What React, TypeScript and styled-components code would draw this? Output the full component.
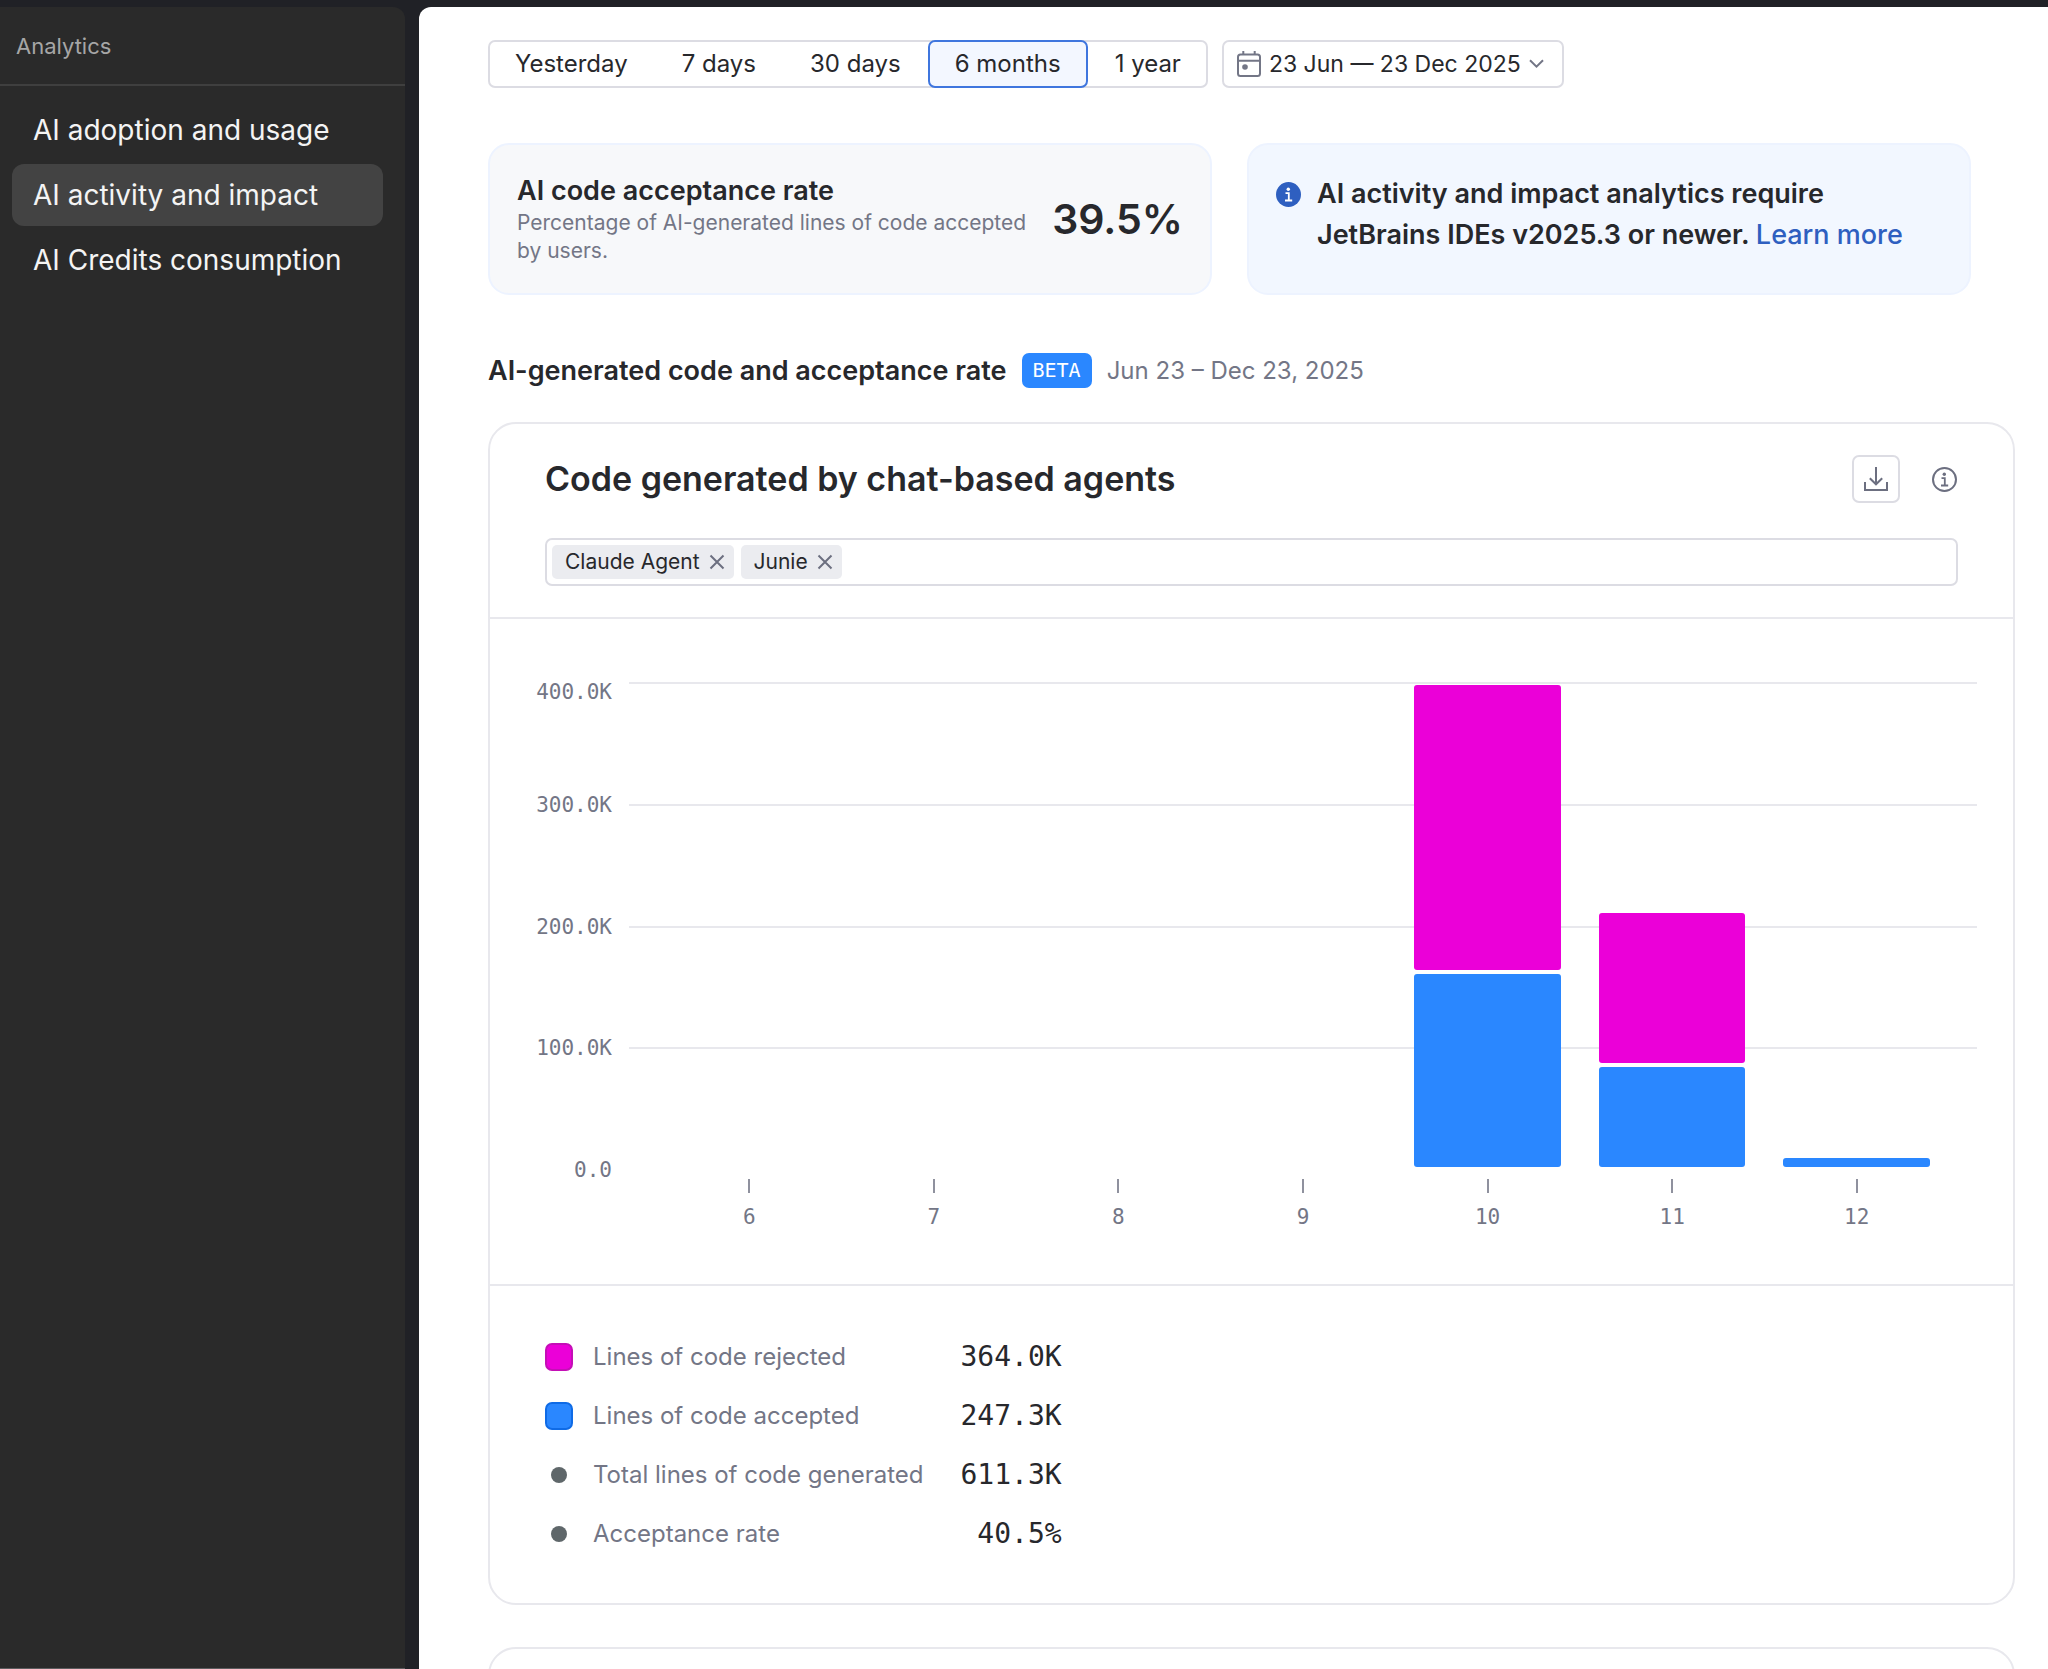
import React, { useState } from 'react';
import styled, { createGlobalStyle } from 'styled-components';

const sans = "Inter, 'Liberation Sans', sans-serif";
const mono = "'DejaVu Sans Mono', 'Liberation Mono', monospace";

const color = {
  frame: '#202126',
  sidebar: '#2a2a2a',
  ink: '#27282c',
  muted: '#737686',
  line: '#e8e8ed',
  control: '#dcdce3',
  accent: '#2e5fc0',
  blue: '#2a87ff',
  magenta: '#eb00d8',
};

const GlobalStyle = createGlobalStyle`
  *, *::before, *::after { box-sizing: border-box; }
  body {
    margin: 0;
    background: ${color.frame};
    color: ${color.ink};
    font-family: ${sans};
  }
  button, input { font: inherit; color: inherit; }
  h1, h2, p, ul, dl, dd { margin: 0; padding: 0; }
  ul { list-style: none; }
`;

const Shell = styled.div`
  display: grid;
  grid-template-columns: 405px minmax(0, 1fr);
  gap: 14px;
  height: 100vh;
  padding-top: 7px;
  overflow: hidden;
`;

/* Sidebar */

const Sidebar = styled.aside`
  border-bottom: 1px solid #5c5c5e;
  border-radius: 0 12px 0 0;
  background: ${color.sidebar};
`;

const SidebarTitle = styled.p`
  padding: 24px 16px 23px;
  border-bottom: 2px solid #3f3f3f;
  color: #a6a6a6;
  font-size: 22px;
  line-height: 30px;
`;

const NavList = styled.ul`
  display: flex;
  flex-direction: column;
  gap: 3px;
  padding: 13px 22px 0 12px;
`;

const NavLink = styled.a<{ $active?: boolean }>`
  display: block;
  padding: 0 21px;
  border-radius: 12px;
  background: ${(p) => (p.$active ? '#434343' : 'transparent')};
  color: #f4f4f4;
  font-size: 28px;
  line-height: 62px;
  text-decoration: none;
  white-space: nowrap;
`;

/* Content */

const Content = styled.main`
  padding: 33px 33px 0 69px;
  background: #fff;
  border-radius: 12px 0 0 0;
  overflow: hidden;
`;

const Toolbar = styled.div`
  display: flex;
  gap: 14px;
`;

const Segments = styled.div`
  display: flex;
  height: 48px;
  border-radius: 7px;
  box-shadow: inset 0 0 0 2px ${color.control};
`;

const Segment = styled.button`
  padding: 0 25px;
  border: 2px solid transparent;
  border-radius: 7px;
  background: transparent;
  font-size: 24px;
  line-height: 32px;
  white-space: nowrap;
  cursor: pointer;

  &[aria-pressed='true'] {
    border-color: #3f76de;
    background: #f3f7ff;
  }
`;

const DateButton = styled.button`
  display: flex;
  align-items: center;
  gap: 8px;
  height: 48px;
  padding: 0 18px 0 13px;
  border: 2px solid ${color.control};
  border-radius: 7px;
  background: #fff;
  font-size: 23px;
  line-height: 32px;
  white-space: nowrap;
  cursor: pointer;
`;

const Summary = styled.section`
  display: grid;
  grid-template-columns: 1fr 1fr;
  gap: 35px;
  margin: 55px 44px 0 0;
`;

const SummaryCard = styled.div<{ $tone: 'plain' | 'info' }>`
  display: flex;
  align-items: ${(p) => (p.$tone === 'info' ? 'flex-start' : 'center')};
  gap: 16px;
  min-height: 152px;
  padding: 28px 27px;
  border: 2px solid #edf3ff;
  border-radius: 21px;
  background: ${(p) => (p.$tone === 'info' ? '#f2f7ff' : '#f7f8fa')};

  > svg {
    flex: none;
    margin-top: 9px;
  }
`;

const Metric = styled.div`
  flex: 1;
  min-width: 0;
`;

const MetricTitle = styled.h2`
  font-size: 27px;
  font-weight: 600;
  line-height: 36px;
`;

const MetricText = styled.p`
  color: ${color.muted};
  font-size: 21px;
  line-height: 28px;
`;

const MetricValue = styled.strong`
  font-size: 41px;
  font-weight: 600;
  line-height: 56px;
`;

const Notice = styled.p`
  font-size: 27px;
  font-weight: 600;
  line-height: 41px;
`;

const Link = styled.a`
  color: ${color.accent};
  font-weight: 500;
  text-decoration: none;
`;

const SectionHead = styled.header`
  display: flex;
  align-items: center;
  gap: 15px;
  margin: 58px 0 34px;
`;

const SectionTitle = styled.h1`
  font-size: 27px;
  font-weight: 600;
  line-height: 35px;
`;

const Badge = styled.span`
  padding: 0 11px;
  border-radius: 7px;
  background: ${color.blue};
  color: #fff;
  font-family: ${mono};
  font-size: 20px;
  line-height: 35px;
`;

const Period = styled.span`
  color: ${color.muted};
  font-size: 24px;
  line-height: 35px;
`;

const Card = styled.section`
  min-height: 400px;
  margin-bottom: 42px;
  border: 2px solid ${color.line};
  border-radius: 28px;
`;

const CardHead = styled.header`
  padding: 31px 55px;
  border-bottom: 2px solid ${color.line};
`;

const TitleRow = styled.div`
  display: flex;
  align-items: center;
  gap: 32px;
  margin-bottom: 35px;
  padding-right: 1px;
`;

const CardTitle = styled.h2`
  flex: 1;
  font-size: 34px;
  font-weight: 600;
  line-height: 48px;
`;

const DownloadButton = styled.button`
  display: grid;
  place-items: center;
  width: 48px;
  height: 48px;
  padding: 0;
  border: 2px solid ${color.control};
  border-radius: 7px;
  background: #fff;
  cursor: pointer;
`;

const InfoButton = styled.button`
  display: grid;
  padding: 0;
  border: 0;
  background: transparent;
  cursor: pointer;
`;

const TagField = styled.div`
  display: flex;
  align-items: center;
  gap: 7px;
  height: 48px;
  padding: 0 5px;
  border: 2px solid ${color.control};
  border-radius: 7px;
`;

const Tag = styled.span`
  display: flex;
  align-items: center;
  gap: 9px;
  height: 34px;
  padding: 0 9px 0 13px;
  border-radius: 5px;
  background: #ebecf0;
  font-size: 21px;
  line-height: 34px;
  white-space: nowrap;
`;

const RemoveTag = styled.button`
  display: grid;
  padding: 0;
  border: 0;
  background: transparent;
  cursor: pointer;
`;

const TagInput = styled.input`
  flex: 1;
  min-width: 0;
  border: 0;
  outline: 0;
  background: transparent;
  font-size: 21px;
`;

/* Chart */

const Chart = styled.div`
  display: grid;
  grid-template-columns: 76px minmax(0, 1fr);
  grid-template-rows: 487px auto;
  column-gap: 17px;
  padding: 63px 36px 55px 46px;
  border-bottom: 2px solid ${color.line};
  color: ${color.muted};
  font-family: ${mono};
  font-size: 21px;
  line-height: 24px;
`;

const AxisLabels = styled.div`
  display: grid;
  grid-template-rows: repeat(4, 1fr) 0;
  text-align: right;
`;

const AxisLabel = styled.span`
  margin-top: -11px;

  &:first-child {
    margin-top: -2px;
  }
`;

const Plot = styled.div`
  display: grid;
`;

const GridLines = styled.div`
  display: grid;
  grid-area: 1 / 1;
  grid-template-rows: repeat(4, 1fr);
`;

const GridLine = styled.div`
  border-top: 2px solid ${color.line};
`;

const Bars = styled.div`
  display: flex;
  grid-area: 1 / 1;
  gap: 38px;
  min-height: 0;
  padding: 0 47px 2px;
`;

const Stack = styled.div`
  display: flex;
  flex: 1;
  flex-direction: column;
  justify-content: flex-end;
  gap: 4px;
`;

const Bar = styled.div<{ $fill: string }>`
  border-radius: 3px;
  background: ${(p) => p.$fill};
`;

const Months = styled.div`
  display: flex;
  grid-column: 2;
  gap: 38px;
  padding: 10px 47px 0;
`;

const Month = styled.div`
  display: flex;
  flex: 1;
  flex-direction: column;
  align-items: center;
  gap: 12px;

  &::before {
    width: 2px;
    height: 14px;
    background: #8f919e;
    content: '';
  }
`;

/* Legend */

const Legend = styled.dl`
  display: grid;
  grid-template-columns: 28px auto auto;
  justify-content: start;
  padding: 41px 55px 40px;
`;

const LegendRow = styled.div`
  display: contents;
  line-height: 59px;
`;

const Marker = styled.span<{ $fill?: string; $edge?: string }>`
  place-self: center;
  width: ${(p) => (p.$fill ? 28 : 16)}px;
  height: ${(p) => (p.$fill ? 28 : 16)}px;
  border: ${(p) => (p.$edge ? `2px solid ${p.$edge}` : 0)};
  border-radius: ${(p) => (p.$fill ? 7 : 8)}px;
  background: ${(p) => p.$fill ?? '#5f676a'};
`;

const LegendLabel = styled.dt`
  padding: 0 37px 0 20px;
  color: ${color.muted};
  font-size: 24px;
`;

const LegendValue = styled.dd`
  font-family: ${mono};
  font-size: 28px;
  text-align: right;
`;

const CalendarIcon = () => (
  <svg width="24" height="26" viewBox="0 0 24 26" fill="none" stroke="#737686" strokeWidth="2" aria-hidden="true">
    <rect x="1" y="3.5" width="22" height="21.5" rx="2.5" />
    <path d="M1 9.7h22M6.3 0v3.5M17.7 0v3.5" />
    <circle cx="8" cy="16" r="2.8" fill="#737686" stroke="none" />
  </svg>
);

const ChevronIcon = () => (
  <svg width="15" height="10" viewBox="0 0 15 10" fill="none" stroke="#737686" strokeWidth="2" aria-hidden="true">
    <path d="M1 1.2l6.5 6.5L14 1.2" />
  </svg>
);

const DownloadIcon = () => (
  <svg width="24" height="24" viewBox="0 0 24 24" fill="none" stroke="#6c6f80" strokeWidth="2" aria-hidden="true">
    <path d="M12 0v17M5.8 11.3l6.2 6 6.2-6M1 15v8h22v-8" />
  </svg>
);

const CrossIcon = () => (
  <svg width="16" height="16" viewBox="0 0 16 16" fill="none" stroke="#6c6f80" strokeWidth="2" aria-hidden="true">
    <path d="M1.5 1.5l13 13M14.5 1.5l-13 13" />
  </svg>
);

const InfoIcon = ({ solid }: { solid?: boolean }) => {
  const mark = solid ? '#fff' : '#6c6f80';
  return (
    <svg width="25" height="25" viewBox="0 0 25 25" fill="none" aria-hidden="true">
      <circle
        cx="12.5"
        cy="12.5"
        r={solid ? 12.5 : 11.5}
        fill={solid ? color.accent : 'none'}
        stroke={solid ? 'none' : mark}
        strokeWidth="2"
      />
      <circle cx="12.3" cy="7.2" r="1.7" fill={mark} />
      <path d="M9.5 11.2h3.3v7M9 18.5h7.2" stroke={mark} strokeWidth="1.8" />
    </svg>
  );
};

const pages = ['AI adoption and usage', 'AI activity and impact', 'AI Credits consumption'];
const ranges = ['Yesterday', '7 days', '30 days', '6 months', '1 year'];
const axis = ['400.0K', '300.0K', '200.0K', '100.0K', '0.0'];
const axisMax = 400;

const months = [
  { name: '6', rejected: 0, accepted: 0 },
  { name: '7', rejected: 0, accepted: 0 },
  { name: '8', rejected: 0, accepted: 0 },
  { name: '9', rejected: 0, accepted: 0 },
  { name: '10', rejected: 235, accepted: 159 },
  { name: '11', rejected: 123.6, accepted: 82.8 },
  { name: '12', rejected: 0, accepted: 7.2 },
];

const legend = [
  { label: 'Lines of code rejected', value: '364.0K', fill: color.magenta, edge: '#c40fb6' },
  { label: 'Lines of code accepted', value: '247.3K', fill: color.blue, edge: '#0f6be6' },
  { label: 'Total lines of code generated', value: '611.3K' },
  { label: 'Acceptance rate', value: '40.5%' },
];

const share = (value: number) => `${(value / axisMax) * 100}%`;

export default function App() {
  const [range, setRange] = useState('6 months');
  const [agents, setAgents] = useState(['Claude Agent', 'Junie']);

  return (
    <>
      <GlobalStyle />
      <Shell>
        <Sidebar>
          <SidebarTitle>Analytics</SidebarTitle>
          <nav aria-label="Analytics">
            <NavList>
              {pages.map((page, i) => (
                <li key={page}>
                  <NavLink href="#" $active={i === 1} aria-current={i === 1 ? 'page' : undefined}>
                    {page}
                  </NavLink>
                </li>
              ))}
            </NavList>
          </nav>
        </Sidebar>

        <Content>
          <Toolbar>
            <Segments role="group" aria-label="Period">
              {ranges.map((name) => (
                <Segment key={name} type="button" aria-pressed={name === range} onClick={() => setRange(name)}>
                  {name}
                </Segment>
              ))}
            </Segments>
            <DateButton type="button" aria-haspopup="dialog">
              <CalendarIcon />
              23 Jun — 23 Dec 2025
              <ChevronIcon />
            </DateButton>
          </Toolbar>

          <Summary>
            <SummaryCard $tone="plain">
              <Metric>
                <MetricTitle>AI code acceptance rate</MetricTitle>
                <MetricText>Percentage of AI-generated lines of code accepted by users.</MetricText>
              </Metric>
              <MetricValue>39.5%</MetricValue>
            </SummaryCard>
            <SummaryCard $tone="info">
              <InfoIcon solid />
              <Notice>
                AI activity and impact analytics require JetBrains IDEs v2025.3 or newer.{' '}
                <Link href="#">Learn more</Link>
              </Notice>
            </SummaryCard>
          </Summary>

          <SectionHead>
            <SectionTitle>AI-generated code and acceptance rate</SectionTitle>
            <Badge>BETA</Badge>
            <Period>Jun 23 – Dec 23, 2025</Period>
          </SectionHead>

          <Card>
            <CardHead>
              <TitleRow>
                <CardTitle>Code generated by chat-based agents</CardTitle>
                <DownloadButton type="button" aria-label="Download">
                  <DownloadIcon />
                </DownloadButton>
                <InfoButton type="button" aria-label="About this chart">
                  <InfoIcon />
                </InfoButton>
              </TitleRow>
              <TagField>
                {agents.map((agent) => (
                  <Tag key={agent}>
                    {agent}
                    <RemoveTag
                      type="button"
                      aria-label={`Remove ${agent}`}
                      onClick={() => setAgents(agents.filter((a) => a !== agent))}
                    >
                      <CrossIcon />
                    </RemoveTag>
                  </Tag>
                ))}
                <TagInput type="text" aria-label="Filter by agent" />
              </TagField>
            </CardHead>

            <Chart>
              <AxisLabels>
                {axis.map((label) => (
                  <AxisLabel key={label}>{label}</AxisLabel>
                ))}
              </AxisLabels>
              <Plot>
                <GridLines>
                  {axis.slice(0, 4).map((label) => (
                    <GridLine key={label} />
                  ))}
                </GridLines>
                <Bars>
                  {months.map((m) => (
                    <Stack key={m.name}>
                      {m.rejected > 0 && <Bar $fill={color.magenta} style={{ height: share(m.rejected) }} />}
                      {m.accepted > 0 && <Bar $fill={color.blue} style={{ height: share(m.accepted) }} />}
                    </Stack>
                  ))}
                </Bars>
              </Plot>
              <Months>
                {months.map((m) => (
                  <Month key={m.name}>{m.name}</Month>
                ))}
              </Months>
            </Chart>

            <Legend>
              {legend.map((row) => (
                <LegendRow key={row.label}>
                  <Marker $fill={row.fill} $edge={row.edge} />
                  <LegendLabel>{row.label}</LegendLabel>
                  <LegendValue>{row.value}</LegendValue>
                </LegendRow>
              ))}
            </Legend>
          </Card>

          <Card />
        </Content>
      </Shell>
    </>
  );
}
